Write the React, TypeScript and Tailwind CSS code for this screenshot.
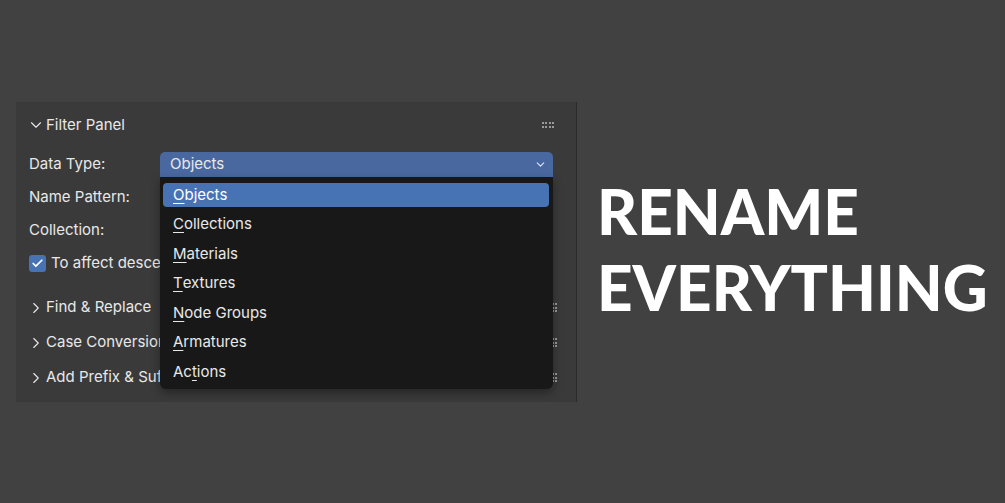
import { ChevronDown, ChevronRight, Check } from "lucide-react";

/* ---------- data ---------- */
const menuItems: { key: string; pre: string; ul: string; post: string }[] = [
  { key: "objects", pre: "", ul: "O", post: "bjects" },
  { key: "collections", pre: "", ul: "C", post: "ollections" },
  { key: "materials", pre: "", ul: "M", post: "aterials" },
  { key: "textures", pre: "", ul: "T", post: "extures" },
  { key: "nodegroups", pre: "", ul: "N", post: "ode Groups" },
  { key: "armatures", pre: "", ul: "A", post: "rmatures" },
  { key: "actions", pre: "Ac", ul: "t", post: "ions" },
];

const subPanels = ["Find & Replace", "Case Conversion", "Add Prefix & Suffix"];

/* grip dots (header: 4x2, subpanel: 2x3) */
function Grip({ cols, rows }: { cols: number; rows: number }) {
  return (
    <div
      className="grid gap-[1.5px]"
      style={{ gridTemplateColumns: `repeat(${cols}, 2px)` }}
    >
      {Array.from({ length: cols * rows }).map((_, i) => (
        <span key={i} className="h-[2px] w-[2px] bg-[#9a9a9a]" />
      ))}
    </div>
  );
}

function Row({ label, children }: { label: string; children?: React.ReactNode }) {
  return (
    <div className="flex h-[25px] items-center">
      <span className="w-[131px] shrink-0">{label}</span>
      {children}
    </div>
  );
}

/* ─────────────────────────────────────────────────────────── */
export default function App() {
  return (
    <div
      className="flex h-[503px] w-[1005px] items-start overflow-hidden bg-[#414141] text-[15px] text-[#e8e8e8]"
      style={{ fontFamily: "Inter, 'Noto Sans', sans-serif" }}
    >
      {/* -------- Blender panel -------- */}
      <div className="ml-[16px] mt-[102px] flex h-[300px] w-[561px] shrink-0 border-r border-[#2a2a2a] bg-[#3a3a3a]">
        <div className="flex-1 pl-[13px] pr-[21px] pt-[1px]">
          {/* header */}
          <div className="flex h-[44px] items-center">
            <ChevronDown size={18} strokeWidth={1.5} className="ml-[-2px] mr-[1px] shrink-0" />
            <span>Filter Panel</span>
            <div className="ml-auto mr-[1px]">
              <Grip cols={4} rows={2} />
            </div>
          </div>

          <div className="mt-[5px] flex flex-col gap-[8px]">
            <Row label="Data Type:">
              <div className="relative w-[393px]">
                <div className="flex h-[25px] items-center rounded-t-[5px] bg-[#4a68a0] pl-[10px] pr-[6px]">
                  <span>Objects</span>
                  <ChevronDown size={13} strokeWidth={2} className="ml-auto text-[#dfe6f2]" />
                </div>

                {/* dropdown menu (overlay) */}
                <div className="absolute left-0 top-[25px] z-10 h-[212px] w-full rounded-b-[6px] bg-[#181818] pl-[3px] pr-[4px] pt-[6px] shadow-[0_4px_10px_rgba(0,0,0,0.35)]">
                  <div className="flex flex-col gap-[5.5px]">
                    {menuItems.map((m, i) => (
                      <div
                        key={m.key}
                        className={
                          i === 0
                            ? "flex h-[24px] items-center rounded-[4px] bg-[#4772b3] pl-[10px] text-white"
                            : "flex h-[24px] items-center pl-[10px]"
                        }
                      >
                        {m.pre}
                        <span className="underline decoration-1 underline-offset-[3px]">{m.ul}</span>
                        {m.post}
                      </div>
                    ))}
                  </div>
                </div>
              </div>
            </Row>
            <Row label="Name Pattern:">
              <div className="h-[25px] w-[393px] rounded-[5px] bg-[#1d1d1d]" />
            </Row>
            <Row label="Collection:">
              <div className="h-[25px] w-[393px] rounded-[5px] bg-[#282828]" />
            </Row>
            <div className="flex h-[25px] items-center">
              <span className="flex h-[17px] w-[17px] items-center justify-center rounded-[3px] bg-[#4772b3]">
                <Check size={13} strokeWidth={3.2} className="text-white" />
              </span>
              <span className="ml-[5px]">To affect descendants</span>
            </div>
          </div>

          {/* collapsed sub panels */}
          <div className="mt-[14px] flex flex-col">
            {subPanels.map((s) => (
              <div key={s} className="flex h-[35px] items-center">
                <ChevronRight size={18} strokeWidth={1.5} className="ml-[-2px] mr-[1px] shrink-0" />
                <span>{s}</span>
                <div className="ml-auto mr-[-2px]">
                  <Grip cols={2} rows={3} />
                </div>
              </div>
            ))}
          </div>
        </div>
      </div>

      {/* -------- title -------- */}
      <div
        className="ml-[20px] mt-[173px] text-[62px] font-black leading-[76px] text-white"
        style={{ fontFamily: "Lato, 'Open Sans', sans-serif" }}
      >
        <div>RENAME</div>
        <div>EVERYTHING</div>
      </div>
    </div>
  );
}
